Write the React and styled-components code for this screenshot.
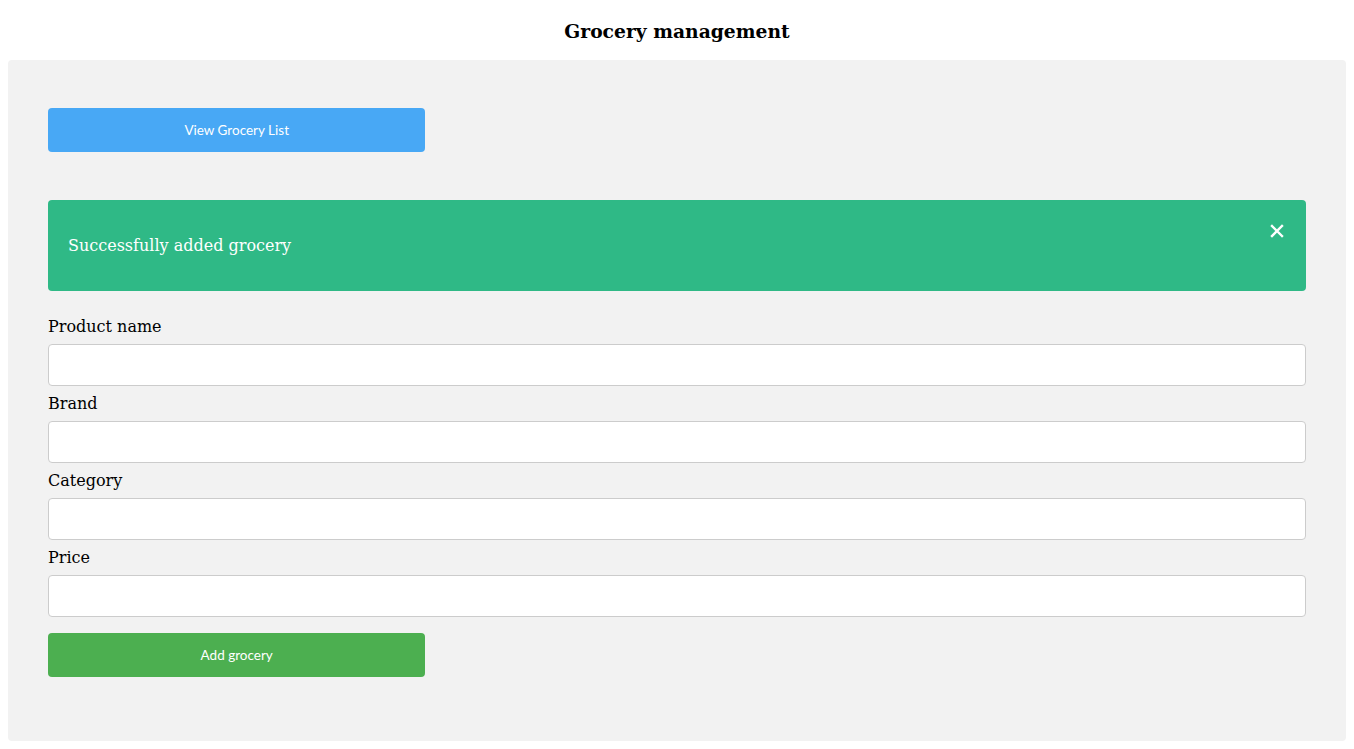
import React from "react";
import styled, { createGlobalStyle } from "styled-components";

const Global = createGlobalStyle`
  body {
    margin: 8px;
    font-family: "DejaVu Serif", serif;
    background: #fff;
    color: #000;
  }
`;

const Title = styled.h3`
  font-family: "DejaVu Serif", serif;
  font-size: 18.72px;
  font-weight: bold;
  text-align: center;
  margin: 11.6px 0 18.72px;
`;

const Panel = styled.div`
  background: #f2f2f2;
  border-radius: 4px;
  padding: 48px 40px 64px;
`;

const Button = styled.button`
  display: block;
  width: 30%;
  height: 44px;
  border: none;
  border-radius: 4px;
  background: ${(p) => p.$bg};
  color: #fff;
  font-family: "Lato", "Open Sans", sans-serif;
  font-size: 13.5px;
  cursor: pointer;
  margin-top: ${(p) => p.$mt || 0}px;
`;

const Alert = styled.div`
  position: relative;
  margin: 48px 0 26px;
  background: #2fb986;
  color: #fff;
  border-radius: 4px;
  padding: 36px 20px;
  font-size: 16px;
  line-height: 19px;
`;

const Close = styled.span`
  position: absolute;
  top: 24px;
  right: 22px;
  width: 14px;
  height: 14px;
  display: flex;
`;

const Label = styled.label`
  display: block;
  font-size: 16px;
  line-height: 19px;
  margin-bottom: 8px;
`;

const Input = styled.input`
  display: block;
  box-sizing: border-box;
  width: 100%;
  height: 42px;
  border: 1px solid #cccccc;
  border-radius: 4px;
  background: #fff;
  margin: 0 0 8px;
  font-size: 16px;
  padding: 0 10px;
`;

const fields = ["Product name", "Brand", "Category", "Price"];

export default function App() {
  return (
    <>
      <Global />
      <Title>Grocery management</Title>
      <Panel>
        <Button $bg="#48a8f5">View Grocery List</Button>
        <Alert>
          Successfully added grocery
          <Close>
            <svg width="14" height="14" viewBox="0 0 14 14">
              <path d="M2 2 L12 12 M12 2 L2 12" stroke="#fff" strokeWidth="2.4" strokeLinecap="square" />
            </svg>
          </Close>
        </Alert>
        {fields.map((f) => (
          <div key={f}>
            <Label>{f}</Label>
            <Input type="text" />
          </div>
        ))}
        <Button $bg="#4caf50" $mt={16}>Add grocery</Button>
      </Panel>
    </>
  );
}
